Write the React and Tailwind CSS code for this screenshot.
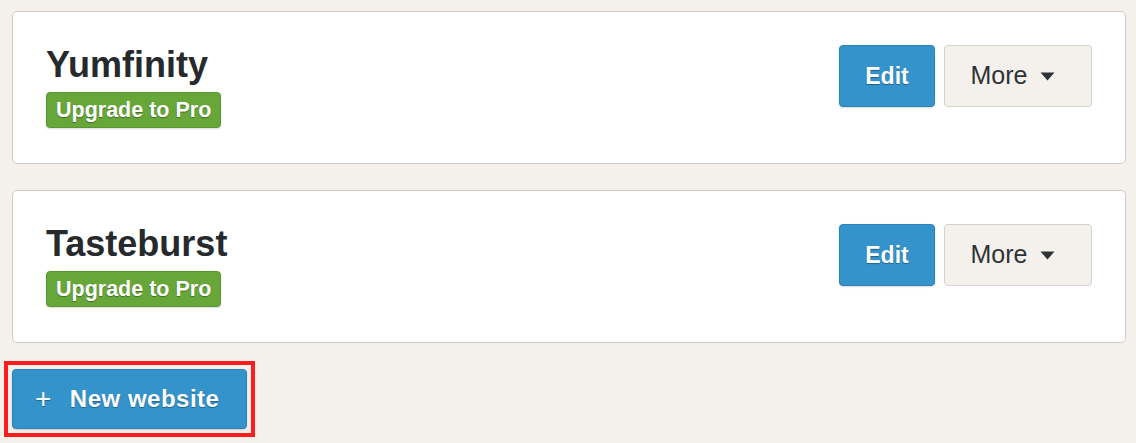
import React from 'react';

const sites = ['Yumfinity', 'Tasteburst'];

function SiteCard({ name }) {
  return (
    <div className="flex items-start justify-between rounded-[5px] border border-[#cfcbc6] bg-white px-[33px] pt-[33px] pb-[35px]">
      <div>
        <h2 className="text-[36px] font-bold leading-[40px] text-[#262a2d]">{name}</h2>
        <span className="mt-[7px] inline-flex h-[36px] items-center rounded-[4px] border border-[#5c9632] bg-[#67a73a] px-[9px] text-[21.5px] font-bold text-white shadow-[0_1px_2px_rgba(0,0,0,0.15)] [text-shadow:0_1px_1px_rgba(0,0,0,0.35)]">
          Upgrade to Pro
        </span>
      </div>
      <div className="flex gap-[9px]">
        <button className="h-[62px] w-[96px] rounded-[4px] border border-[#2c81b5] bg-[#3493cb] text-[23px] font-bold text-white shadow-[0_1px_2px_rgba(0,0,0,0.15)] [text-shadow:0_1px_1px_rgba(0,0,0,0.35)]">
          Edit
        </button>
        <button className="flex h-[62px] w-[148px] items-center justify-center gap-[13px] rounded-[4px] border border-[#d6d2cc] bg-[#f4f1ec] pr-[10px] text-[25px] text-[#2f3336]">
          More
          <svg width="15" height="9" viewBox="0 0 15 9">
            <path d="M0.5 0.5 H14.5 L7.5 8.5 Z" fill="#2f3336" />
          </svg>
        </button>
      </div>
    </div>
  );
}

export default function App() {
  return (
    <div className="min-h-[443px] bg-[#f4f1ec] pl-[12px] pr-[10px] pt-[11px] font-['Liberation_Sans',Arial,sans-serif]">
      <div className="flex flex-col gap-[26px]">
        {sites.map((s) => (
          <SiteCard key={s} name={s} />
        ))}
      </div>
      <div className="-ml-[8px] mt-[18px] inline-block border-[4px] border-[#ff1c1c] p-[4px]">
        <button className="flex h-[60px] w-[235px] items-center rounded-[4px] border border-[#2c81b5] bg-[#3493cb] pl-[22px] text-[24px] font-bold tracking-[0.5px] text-white shadow-[0_1px_2px_rgba(0,0,0,0.15)] [text-shadow:0_1px_1px_rgba(0,0,0,0.35)]">
          <span className="mr-[18px] text-[28px] font-normal leading-none">+</span>
          New website
        </button>
      </div>
    </div>
  );
}
